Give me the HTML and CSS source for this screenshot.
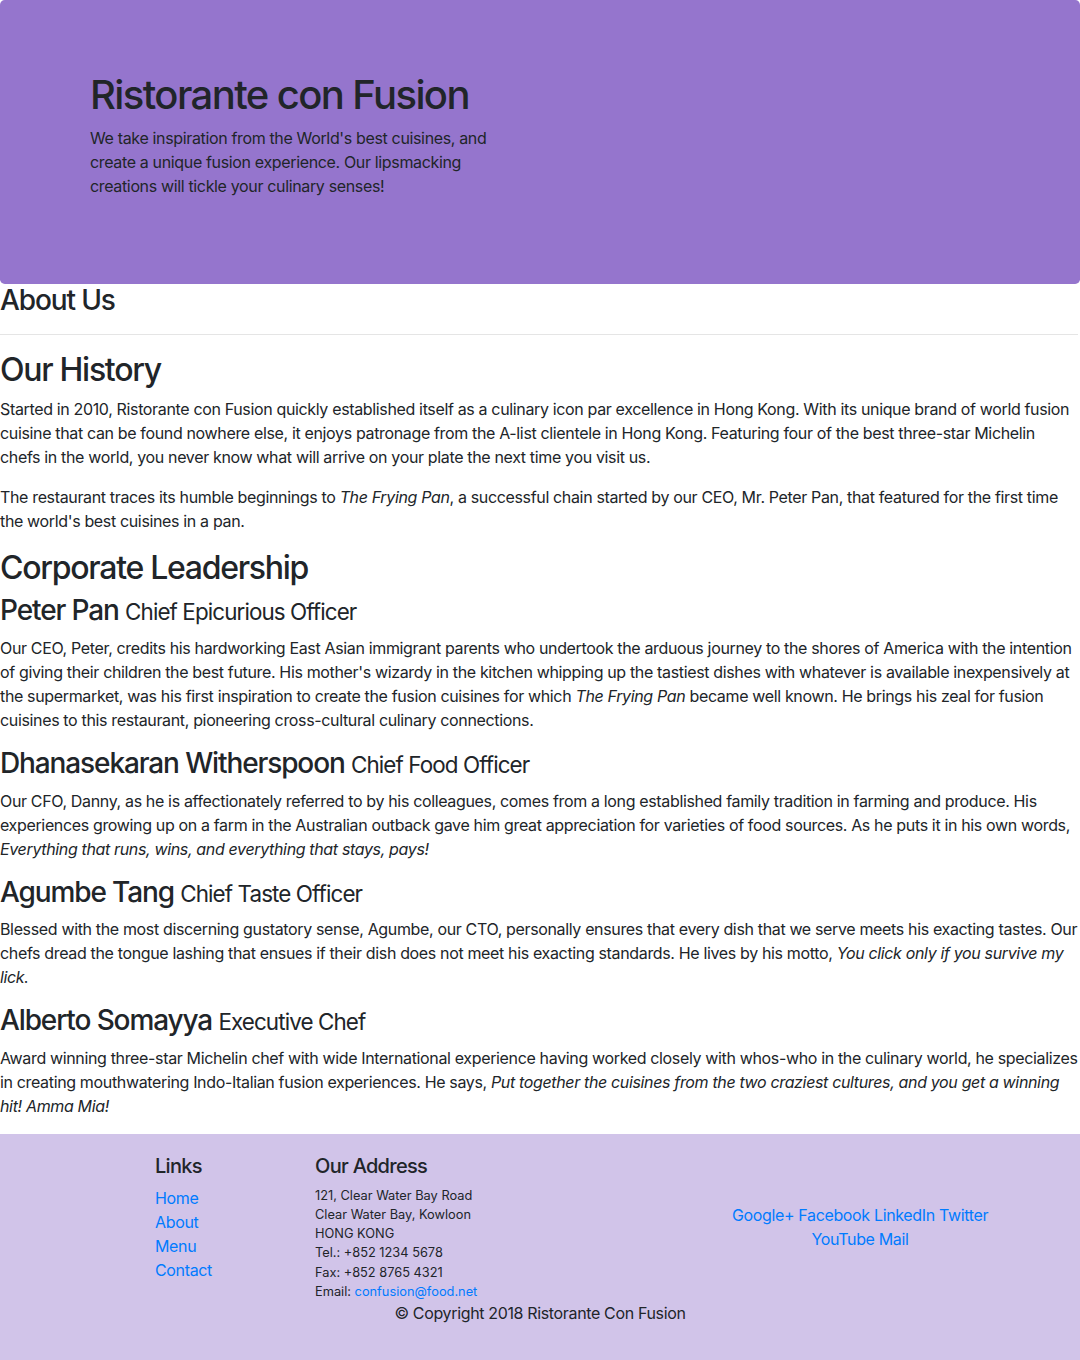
FILE: index.html
```html
<!DOCTYPE html>
<html lang="en">
<head>
<meta charset="utf-8">
<title>Ristorante con Fusion: About Us</title>
<link rel="stylesheet" href="styles.css">
</head>
<body>
<header class="jumbotron">
  <div class="jumbo-inner">
    <h1 class="brand-title">Ristorante con Fusion</h1>
    <p class="brand-lead">We take inspiration from the World's best cuisines, and create a unique fusion experience. Our lipsmacking creations will tickle your culinary senses!</p>
  </div>
</header>

<main class="content">
  <h3 class="page-title">About Us</h3>
  <hr class="divider">

  <h2 class="section-title">Our History</h2>
  <p class="text">Started in 2010, Ristorante con Fusion quickly established itself as a culinary icon par excellence in Hong Kong. With its unique brand of world fusion cuisine that can be found nowhere else, it enjoys patronage from the A-list clientele in Hong Kong. Featuring four of the best three-star Michelin chefs in the world, you never know what will arrive on your plate the next time you visit us.</p>
  <p class="text">The restaurant traces its humble beginnings to <em>The Frying Pan</em>, a successful chain started by our CEO, Mr. Peter Pan, that featured for the first time the world's best cuisines in a pan.</p>

  <h2 class="section-title section-title-tight">Corporate Leadership</h2>

  <h3 class="leader-name">Peter Pan <small class="leader-role">Chief Epicurious Officer</small></h3>
  <p class="text bio">Our CEO, Peter, credits his hardworking East Asian immigrant parents who undertook the arduous journey to the shores of America with the intention of giving their children the best future. His mother's wizardy in the kitchen whipping up the tastiest dishes with whatever is available inexpensively at the supermarket, was his first inspiration to create the fusion cuisines for which <em>The Frying Pan</em> became well known. He brings his zeal for fusion cuisines to this restaurant, pioneering cross-cultural culinary connections.</p>

  <h3 class="leader-name">Dhanasekaran Witherspoon <small class="leader-role">Chief Food Officer</small></h3>
  <p class="text bio">Our CFO, Danny, as he is affectionately referred to by his colleagues, comes from a long established family tradition in farming and produce. His experiences growing up on a farm in the Australian outback gave him great appreciation for varieties of food sources. As he puts it in his own words, <em>Everything that runs, wins, and everything that stays, pays!</em></p>

  <h3 class="leader-name">Agumbe Tang <small class="leader-role">Chief Taste Officer</small></h3>
  <p class="text bio">Blessed with the most discerning gustatory sense, Agumbe, our CTO, personally ensures that every dish that we serve meets his exacting tastes. Our chefs dread the tongue lashing that ensues if their dish does not meet his exacting standards. He lives by his motto, <em>You click only if you survive my lick.</em></p>

  <h3 class="leader-name">Alberto Somayya <small class="leader-role">Executive Chef</small></h3>
  <p class="text">Award winning three-star Michelin chef with wide International experience having worked closely with whos-who in the culinary world, he specializes in creating mouthwatering Indo-Italian fusion experiences. He says, <em>Put together the cuisines from the two craziest cultures, and you get a winning hit! Amma Mia!</em></p>
</main>

<footer class="footer">
  <div class="footer-container">
    <div class="footer-row">
      <div class="col-links">
        <h5 class="footer-heading">Links</h5>
        <ul class="link-list">
          <li><a href="#" class="link">Home</a></li>
          <li><a href="#" class="link">About</a></li>
          <li><a href="#" class="link">Menu</a></li>
          <li><a href="#" class="link">Contact</a></li>
        </ul>
      </div>
      <div class="col-address">
        <h5 class="footer-heading">Our Address</h5>
        <address class="address">
          121, Clear Water Bay Road<br>
          Clear Water Bay, Kowloon<br>
          HONG KONG<br>
          Tel.: +852 1234 5678<br>
          Fax: +852 8765 4321<br>
          Email: <a href="mailto:confusion@food.net" class="link">confusion@food.net</a>
        </address>
      </div>
      <div class="col-social">
        <div class="social">
          <a href="#" class="link">Google+</a>
          <a href="#" class="link">Facebook</a>
          <a href="#" class="link">LinkedIn</a>
          <a href="#" class="link">Twitter</a>
          <a href="#" class="link">YouTube</a>
          <a href="#" class="link">Mail</a>
        </div>
      </div>
    </div>
    <div class="copyright-row">
      <p class="copyright">© Copyright 2018 Ristorante Con Fusion</p>
    </div>
  </div>
</footer>
</body>
</html>
```
FILE: styles.css
```css
* { box-sizing: border-box; }

html, body {
  margin: 0;
  padding: 0;
}

body {
  font-family: Inter, "Liberation Sans", sans-serif;
  font-size: 16px;
  line-height: 1.5;
  letter-spacing: -0.35px;
  color: #212529;
  background: #fff;
}

h1, h2, h3, h5 {
  font-weight: 500;
  line-height: 1.2;
  margin: 0 0 8px 0;
  letter-spacing: -0.04em;
}

.jumbotron {
  background: #9575CD;
  border-radius: 4.8px;
  padding: 71px 0 70px;
}

.jumbo-inner {
  padding-left: 90px;
  width: 510px;
}

.brand-title {
  font-size: 40px;
  font-weight: 500;
  margin-bottom: 7px;
}

.brand-lead {
  margin: 0 0 16px 0;
}

.content {
  padding: 0 2px 0 0;
}

.page-title {
  font-size: 28px;
  margin: 0;
}

.divider {
  border: 0;
  border-top: 1px solid rgba(0, 0, 0, 0.1);
  margin: 16px 0;
}

.section-title {
  font-size: 32px;
}

.section-title-tight {
  margin-bottom: 7px;
}

.leader-name {
  font-size: 28px;
}

.leader-role {
  font-size: 80%;
  font-weight: 400;
  letter-spacing: -0.04em;
}

.text {
  margin: 0 0 16px 0;
}

.bio {
  margin-bottom: 15px;
}

.link {
  color: #007bff;
  text-decoration: none;
}

.footer {
  background: #D1C4E9;
  padding: 20px 0;
}

.footer-container {
  width: 960px;
  margin: 0 auto;
}

.footer-row {
  display: flex;
}

.col-links {
  width: 160px;
  margin-left: 80px;
  padding: 0 15px;
}

.col-address {
  width: 400px;
  padding: 0 15px;
}

.col-social {
  width: 320px;
  padding: 0 15px;
  align-self: center;
}

.footer-heading {
  font-size: 20px;
  letter-spacing: -0.035em;
}

.link-list {
  list-style: none;
  margin: 0;
  padding: 0;
}

.address {
  font-style: normal;
  font-size: 12.8px;
  line-height: 1.5;
  letter-spacing: 0;
  margin: 0;
}

.social {
  text-align: center;
}

.copyright-row {
  display: flex;
  justify-content: center;
}

.copyright {
  margin: 0 0 16px 0;
}
```
